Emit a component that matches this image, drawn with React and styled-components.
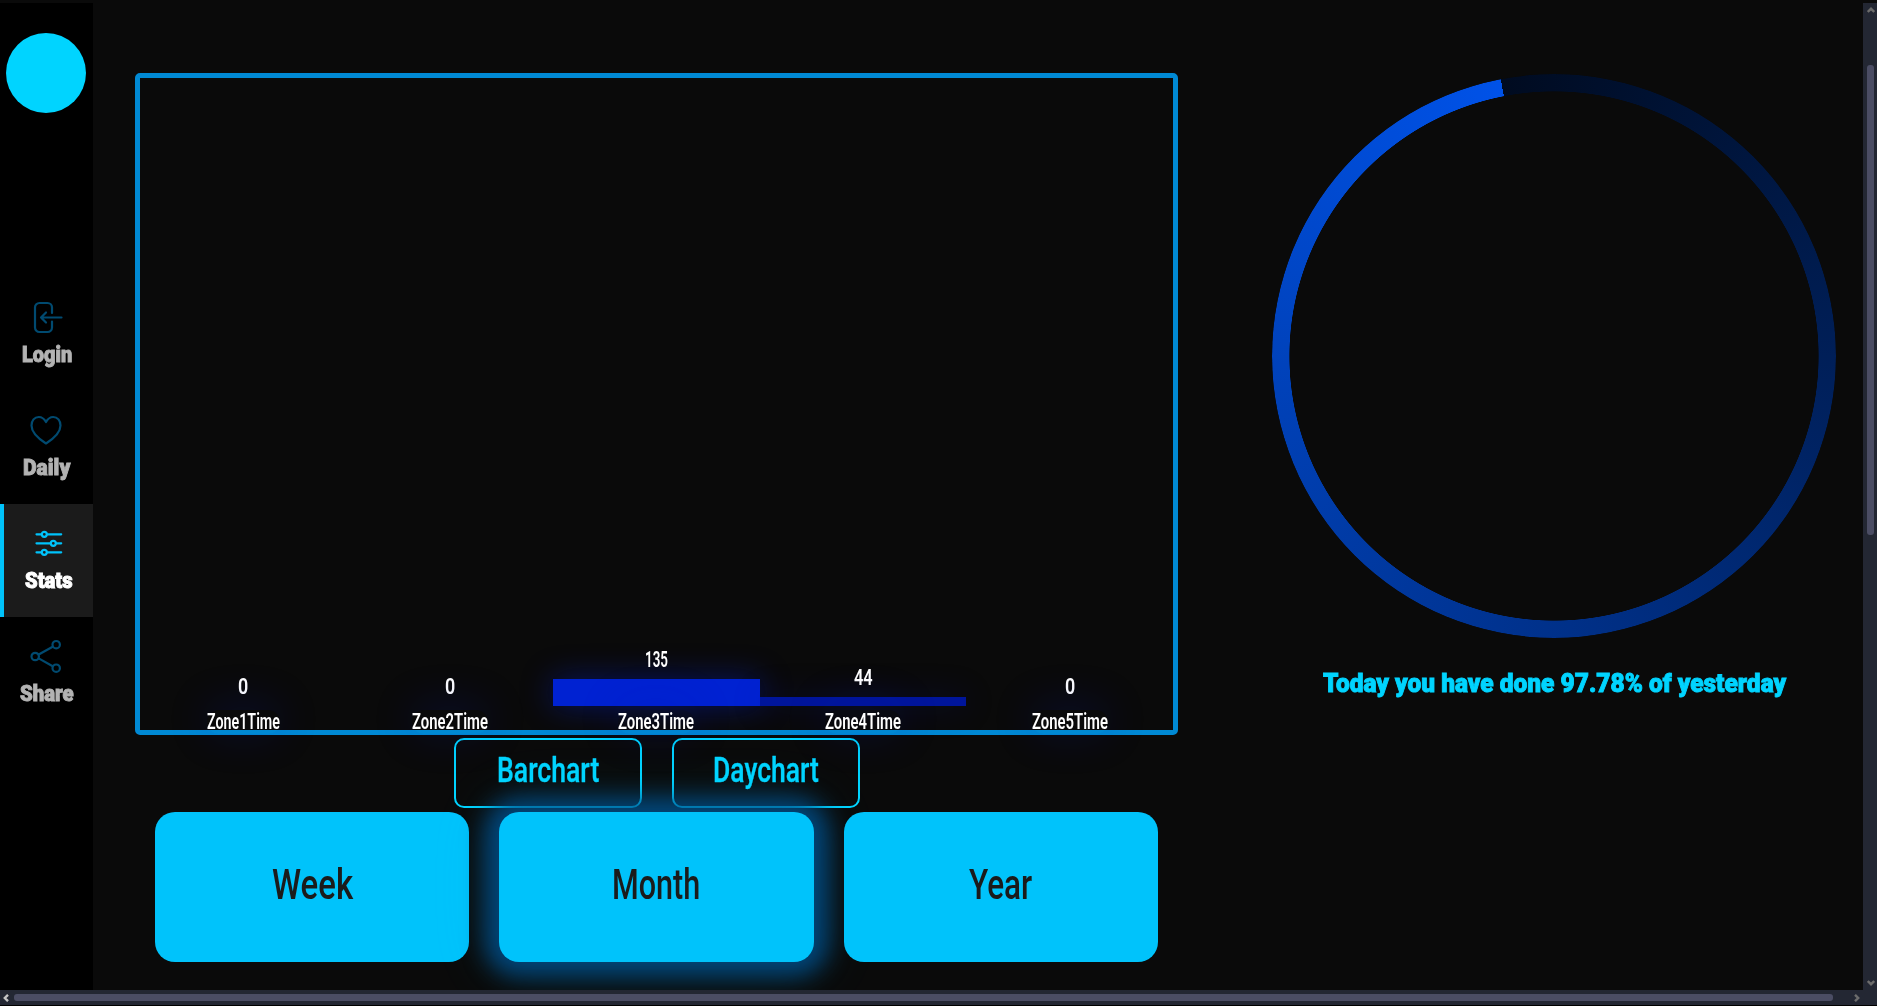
import React, { useLayoutEffect, useRef, useState } from 'react';
import styled, { createGlobalStyle, css } from 'styled-components';

const GlobalStyle = createGlobalStyle`
  * { box-sizing: border-box; }
  body {
    margin: 0;
    background: #0a0a0a;
    font-family: Roboto, 'Liberation Sans', sans-serif;
    overflow: hidden;
  }
  button { font-family: inherit; padding: 0; cursor: pointer; }
`;

const Window = styled.div`
  display: grid;
  grid-template-columns: minmax(0, 1fr) 14px;
  grid-template-rows: 987px 15px;
  width: 1877px;
  height: 1006px;
  padding-top: 3px;
  background: #0a0a0a;
  border-bottom: 1px solid #000;
  overflow: hidden;
`;

const Viewport = styled.div`
  display: flex;
  overflow: hidden;
`;

/* ---------- condensed lettering ---------- */

const FitBox = styled.span`
  display: inline-block;
  width: ${(p) => p.$width}px;
  white-space: nowrap;
  text-align: left;
`;

const FitInk = styled.span`
  display: inline-block;
  transform-origin: 0 50%;
  -webkit-text-stroke: ${(p) => p.$stroke}px currentColor;
`;

function Condensed({ width, stroke = 0, children }) {
  const ref = useRef(null);
  const [scale, setScale] = useState(1);
  useLayoutEffect(() => {
    setScale(width / ref.current.offsetWidth);
  }, [width, children]);
  return (
    <FitBox $width={width}>
      <FitInk ref={ref} $stroke={stroke} style={{ transform: `scaleX(${scale})` }}>{children}</FitInk>
    </FitBox>
  );
}

/* ---------- sidebar ---------- */

const Sidebar = styled.aside`
  flex: 0 0 93px;
  background: #000;
`;

const Avatar = styled.div`
  width: 80px;
  height: 80px;
  margin: 30px 0 165px 6px;
  border-radius: 50%;
  background: #00d4ff;
`;

const NavItem = styled.a`
  display: flex;
  flex-direction: column;
  align-items: center;
  height: 113px;
  padding-top: 21px;
  color: #b3b3b3;
  ${(p) => p.$active && css`
    color: #fff;
    background: #1b1b1b;
    border-left: 4px solid #00c3fb;
  `}
`;

const NavIcon = styled.svg`
  width: 35px;
  height: 37px;
  fill: none;
  stroke: ${(p) => (p.$active ? '#00c3fb' : '#004a70')};
  stroke-width: 2.2;
  stroke-linecap: round;
  stroke-linejoin: round;
`;

const NavLabel = styled.span`
  height: 24px;
  margin-top: 7px;
  font-size: 21.5px;
  font-weight: 900;
  line-height: 24px;
`;

const icons = {
  login: (
    <>
      <path d="M23 14V8.500A4.500 4.500 0 0 0 18.500 4H10.500A4.500 4.500 0 0 0 6 8.500V28.500A4.500 4.500 0 0 0 10.500 33H18.500A4.500 4.500 0 0 0 23 28.500V22.500" />
      <path d="M32.500 18.500H12M17 13.500L12 18.500L17 23.500" />
    </>
  ),
  heart: (
    <path d="M17 10C15 6.500 12.500 5 9.800 5C5.500 5 2.500 8.500 2.500 13.500C2.500 21 10 27 17 31.500C24 27 31.500 21 31.500 13.500C31.500 8.500 28.500 5 24.200 5C21.500 5 19 6.500 17 10Z" />
  ),
  sliders: (
    <>
      <path d="M5.500 9.300H10.500M16.200 9.300H30.200M5.500 18.300H19.400M25.200 18.300H30.200M5.500 27.300H10.500M16.200 27.300H30.200" />
      <circle cx="13.300" cy="9.300" r="2.500" />
      <circle cx="22.300" cy="18.300" r="2.500" />
      <circle cx="13.300" cy="27.300" r="2.500" />
    </>
  ),
  share: (
    <>
      <path d="M9.700 16.500L23.700 8.700M9.700 20.400L23.700 28.200" />
      <circle cx="6.200" cy="18.500" r="3.700" />
      <circle cx="27.200" cy="6.700" r="3.700" />
      <circle cx="27.200" cy="30.200" r="3.700" />
    </>
  ),
};

const navItems = [
  { label: 'Login', icon: 'login', width: 50 },
  { label: 'Daily', icon: 'heart', width: 47 },
  { label: 'Stats', icon: 'sliders', width: 48, active: true },
  { label: 'Share', icon: 'share', width: 54 },
];

/* ---------- bar chart ---------- */

const StatsColumn = styled.main`
  flex: 0 0 1043px;
  margin: 70px 0 0 42px;
`;

const Chart = styled.section`
  display: flex;
  height: 662px;
  border: 5px solid #0089d4;
  border-radius: 5px;
`;

const Zone = styled.div`
  flex: 1 1 0;
  display: flex;
  flex-direction: column;
  justify-content: flex-end;
  align-items: center;
  color: #fff;
  font-size: 21.5px;
  font-weight: 600;
`;

const ZoneValue = styled.span`
  height: 22px;
  margin-bottom: 8px;
  line-height: 22px;
  z-index: 1;
`;

const ZoneBar = styled.div`
  align-self: stretch;
  background: ${(p) => p.$color};
  ${(p) => p.$glow && css`box-shadow: 0 0 32px ${p.$glow};`}
`;

const ZoneLabel = styled.span`
  height: 24px;
  margin: 3.5px 0 -3.5px;
  line-height: 24px;
  z-index: 1;
  border-radius: 12px;
  box-shadow: 0 -3px 44px rgba(0, 24, 190, 0.24);
`;

const zones = [
  { label: 'Zone1Time', value: 0, height: 0, labelWidth: 73, valueWidth: 10 },
  { label: 'Zone2Time', value: 0, height: 0, labelWidth: 76, valueWidth: 10 },
  { label: 'Zone3Time', value: 135, height: 27, labelWidth: 76, valueWidth: 23, color: '#0022d2', glow: 'rgba(0,34,210,.45)' },
  { label: 'Zone4Time', value: 44, height: 9, labelWidth: 76, valueWidth: 19, color: '#00159b', glow: 'rgba(0,21,155,.3)' },
  { label: 'Zone5Time', value: 0, height: 0, labelWidth: 76, valueWidth: 10 },
];

/* ---------- buttons ---------- */

const ChartSwitch = styled.div`
  display: flex;
  justify-content: center;
  gap: 30px;
  margin: 3px 0 4px 1px;
`;

const OutlineButton = styled.button`
  width: 188px;
  height: 70px;
  border: 2px solid #00d4ff;
  border-radius: 10px;
  background: transparent;
  color: #00d4ff;
  font-size: 35.5px;
  font-weight: 500;
  line-height: 61px;
  padding-bottom: 5px;
`;

const RangeRow = styled.div`
  display: flex;
  gap: 30px;
  margin: 0 20px;
`;

const RangeButton = styled.button`
  flex: 1 1 0;
  height: 150px;
  padding-bottom: 6px;
  border: 0;
  border-radius: 20px;
  background: #00c3fb;
  color: #1b1b1b;
  font-size: 42px;
  font-weight: 500;
  ${(p) => p.$selected && css`
    box-shadow: 0 0 22px 14px rgba(0, 76, 136, 0.85), 0 0 60px 8px rgba(0, 212, 255, 0.16);
  `}
`;

/* ---------- progress ring ---------- */

const ProgressColumn = styled.section`
  display: flex;
  flex-direction: column;
  align-items: center;
  flex: 0 0 564px;
  margin: 71px 0 0 94px;
`;

const Ring = styled.div`
  width: 564px;
  height: 564px;
  border-radius: 50%;
  background: conic-gradient(from -10.9deg, #000b20, #0052e8);
  mask: radial-gradient(circle closest-side, transparent 264.300px, #000 264.900px);
`;

const ProgressText = styled.p`
  height: 30px;
  margin: 31px 0 0;
  color: #00d4ff;
  font-size: 25px;
  font-weight: 900;
  line-height: 30px;
`;

/* ---------- scrollbars ---------- */

const VerticalTrack = styled.div`
  display: flex;
  flex-direction: column;
  align-items: center;
  padding: 3px 0 3px 1px;
  background: #232733;
`;

const VerticalThumb = styled.div`
  width: 7px;
  height: 470px;
  margin: 0 0 auto;
  border-radius: 3px;
  background: #4b4d64;
`;

const HorizontalTrack = styled.div`
  display: flex;
  align-items: center;
  grid-column: 1 / -1;
  padding-left: 2px;
  background: #232733;
`;

const HorizontalThumb = styled.div`
  width: 1819px;
  height: 7px;
  margin: 0 20px 0 4px;
  border-radius: 3px;
  background: #4b4d64;
`;

const Arrow = styled.svg`
  flex: none;
  width: 8px;
  height: 8px;
  margin: ${(p) => p.$margin || 0};
  fill: none;
  stroke: ${(p) => p.$color || '#6c6c6c'};
  stroke-width: 2.4;
  transform: rotate(${(p) => p.$turn}deg);
`;

const Chevron = (props) => (
  <Arrow viewBox="0 0 8 8" {...props}>
    <path d="M0.800 6L4 2.800L7.200 6" />
  </Arrow>
);

export default function App() {
  return (
    <>
      <GlobalStyle />
      <Window>
        <Viewport>
          <Sidebar>
            <Avatar />
            <nav>
              {navItems.map((item) => (
                <NavItem key={item.label} $active={item.active}>
                  <NavIcon $active={item.active} viewBox="0 0 35 37">{icons[item.icon]}</NavIcon>
                  <NavLabel><Condensed width={item.width} stroke={0.9}>{item.label}</Condensed></NavLabel>
                </NavItem>
              ))}
            </nav>
          </Sidebar>
          <StatsColumn>
            <Chart>
              {zones.map((zone) => (
                <Zone key={zone.label}>
                  <ZoneValue><Condensed width={zone.valueWidth}>{zone.value}</Condensed></ZoneValue>
                  <ZoneBar $color={zone.color} $glow={zone.glow} style={{ height: zone.height }} />
                  <ZoneLabel><Condensed width={zone.labelWidth}>{zone.label}</Condensed></ZoneLabel>
                </Zone>
              ))}
            </Chart>
            <ChartSwitch>
              <OutlineButton><Condensed width={102} stroke={0.4}>Barchart</Condensed></OutlineButton>
              <OutlineButton><Condensed width={106} stroke={0.4}>Daychart</Condensed></OutlineButton>
            </ChartSwitch>
            <RangeRow>
              <RangeButton><Condensed width={81}>Week</Condensed></RangeButton>
              <RangeButton $selected><Condensed width={88}>Month</Condensed></RangeButton>
              <RangeButton><Condensed width={63}>Year</Condensed></RangeButton>
            </RangeRow>
          </StatsColumn>
          <ProgressColumn>
            <Ring />
            <ProgressText>
              <Condensed width={463} stroke={0.9}>Today you have done 97.78% of yesterday</Condensed>
            </ProgressText>
          </ProgressColumn>
        </Viewport>
        <VerticalTrack>
          <Chevron $turn={0} $margin="0 0 51px" />
          <VerticalThumb />
          <Chevron $turn={180} />
        </VerticalTrack>
        <HorizontalTrack>
          <Chevron $turn={-90} $color="#c4c4c4" />
          <HorizontalThumb />
          <Chevron $turn={90} />
        </HorizontalTrack>
      </Window>
    </>
  );
}
